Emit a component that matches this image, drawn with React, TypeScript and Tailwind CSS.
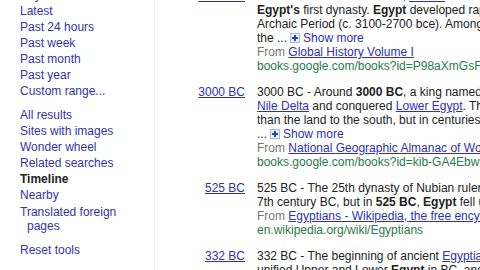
import React from "react";

const LINK = "text-[#2f2fb8]";

const SIDE_GROUPS: { label: string; bold?: boolean }[][] = [
    [
        { label: "Any time" },
        { label: "Latest" },
        { label: "Past 24 hours" },
        { label: "Past week" },
        { label: "Past month" },
        { label: "Past year" },
        { label: "Custom range..." },
    ],
    [
        { label: "All results" },
        { label: "Sites with images" },
        { label: "Wonder wheel" },
        { label: "Related searches" },
        { label: "Timeline", bold: true },
        { label: "Nearby" },
    ],
];

const PlusBox = () => (
    <svg width="10" height="10" viewBox="0 0 10 10" className="inline-block align-[-1px] mx-[3px]">
        <rect x="0.5" y="0.5" width="9" height="9" fill="#eef2fc" stroke="#a9b8e3" />
        <path d="M5 2v6M2 5h6" stroke="#1f47c4" strokeWidth="2" />
    </svg>
);

const A = ({ children }: { children: React.ReactNode }) => (
    <span className={`${LINK} underline`}>{children}</span>
);

const Result = ({ year, lines }: { year: string; lines: React.ReactNode[] }) => (
    <div className="flex mb-[12px]">
        <div className="w-[90px] shrink-0 text-right">
            <span className={`${LINK} underline`}>{year}</span>
        </div>
        <div className="ml-[12px] min-w-0 flex-1 overflow-hidden whitespace-nowrap text-[#222]">
            {lines.map((line, i) => (
                <div key={i}>{line}</div>
            ))}
        </div>
    </div>
);

const ShowMore = ({ lead }: { lead: string }) => (
    <>
        {lead}
        <PlusBox />
        <span className={LINK}>Show more</span>
    </>
);

const From = ({ title }: { title: string }) => (
    <span className="text-[#767676]">
        From <A>{title}</A>
    </span>
);

const Url = ({ children }: { children: React.ReactNode }) => (
    <span className="text-[#2b7a4b]">{children}</span>
);

export default function App() {
    return (
        <div className="w-[480px] h-[270px] overflow-hidden bg-white flex font-['Liberation_Sans',Arial,sans-serif] text-[12px]">
            <aside className="w-[155px] shrink-0 border-r border-[#e9e9e9] pl-[20px] leading-[16px]">
                <div className="-mt-[13px]">
                    {SIDE_GROUPS.map((group, gi) => (
                        <div key={gi} className={gi > 0 ? "mt-[8px]" : ""}>
                            {group.map((item) => (
                                <div
                                    key={item.label}
                                    className={item.bold ? "font-bold text-[#222]" : "text-[#3434a8]"}
                                >
                                    {item.label}
                                </div>
                            ))}
                        </div>
                    ))}
                    <div className="pt-[2px] pl-[7px] -indent-[7px] leading-[14px] text-[#3434a8] w-[100px]">
                        Translated foreign pages
                    </div>
                    <div className="mt-[9px] text-[#3434a8]">Reset tools</div>
                </div>
            </aside>

            <main className="flex-1 min-w-0 leading-[14px]">
                <div className="-mt-[11px]">
                    <Result
                        year="3100 BC"
                        lines={[
                            <>
                                3100 BC - Around 3100 BC, <A>Menes</A> unified <A>Upper</A> or <A>Lower</A>
                            </>,
                            <>
                                <b>Egypt's</b> first dynasty. <b>Egypt</b> developed rapidly during the
                            </>,
                            <>Archaic Period (c. 3100-2700 bce). Among the</>,
                            <ShowMore lead="the ..." />,
                            <From title="Global History Volume I" />,
                            <Url>books.google.com/books?id=P98aXmGsFxwC...</Url>,
                        ]}
                    />
                    <Result
                        year="3000 BC"
                        lines={[
                            <>
                                3000 BC - Around <b>3000 BC</b>, a king named Narmer
                            </>,
                            <>
                                <A>Nile Delta</A> and conquered <A>Lower Egypt</A>. Thanks to
                            </>,
                            <>than the land to the south, but in centuries: the</>,
                            <ShowMore lead="..." />,
                            <From title="National Geographic Almanac of World History" />,
                            <Url>books.google.com/books?id=kib-GA4Ebw0C...</Url>,
                        ]}
                    />
                    <Result
                        year="525 BC"
                        lines={[
                            <>525 BC - The 25th dynasty of Nubian rulers of the</>,
                            <>
                                7th century BC, but in <b>525 BC</b>, <b>Egypt</b> fell under
                            </>,
                            <From title="Egyptians - Wikipedia, the free encyclopedia" />,
                            <Url>en.wikipedia.org/wiki/Egyptians</Url>,
                        ]}
                    />
                    <Result
                        year="332 BC"
                        lines={[
                            <>
                                332 BC - The beginning of ancient <A>Egyptian</A> history
                            </>,
                            <>
                                unified Upper and Lower <b>Egypt</b> in BC, and the
                            </>,
                        ]}
                    />
                </div>
            </main>
        </div>
    );
}
